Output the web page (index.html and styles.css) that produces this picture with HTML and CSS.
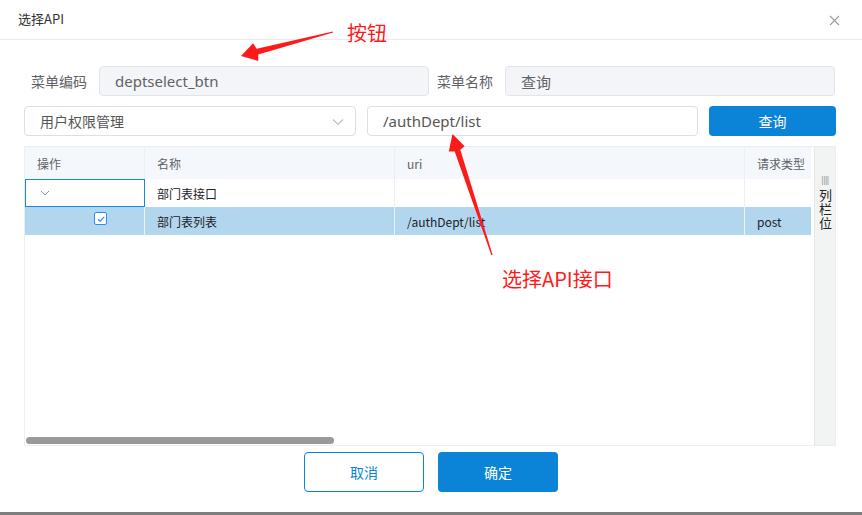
FILE: index.html
```html
<!DOCTYPE html>
<html lang="zh">
<head>
<meta charset="utf-8">
<title>选择API</title>
<link rel="stylesheet" href="styles.css">
</head>
<body>
<div class="dialog">
  <div class="dlg-head">
    <span class="dlg-title">选择API</span>
    <span class="dlg-close"><svg width="11" height="11" viewBox="0 0 11 11"><path d="M1 1L10 10M10 1L1 10" stroke="#9a9a9a" stroke-width="1.1" fill="none"/></svg></span>
  </div>
  <div class="dlg-body">
    <div class="form-row">
      <label class="lbl lbl-1">菜单编码</label>
      <div class="field disabled">deptselect_btn</div>
      <label class="lbl lbl-2">菜单名称</label>
      <div class="field disabled">查询</div>
    </div>
    <div class="search-row">
      <div class="field select">用户权限管理
        <svg class="chev" width="12" height="8" viewBox="0 0 12 8"><path d="M1 1.5L6 6.5L11 1.5" stroke="#b8bcc4" stroke-width="1.1" fill="none"/></svg>
      </div>
      <div class="field uri-input">/authDept/list</div>
      <button class="btn-primary search-btn">查询</button>
    </div>
    <div class="table-wrap">
      <div class="table-main">
        <div class="trow thead">
          <div class="cell c1">操作</div>
          <div class="cell c2">名称</div>
          <div class="cell c3">uri</div>
          <div class="cell c4">请求类型</div>
        </div>
        <div class="trow">
          <div class="cell c1 focused"><svg class="row-chev" width="10" height="6" viewBox="0 0 10 6"><path d="M1 1L5 5L9 1" stroke="#8f949c" stroke-width="1" fill="none"/></svg></div>
          <div class="cell c2 dark">部门表接口</div>
          <div class="cell c3"></div>
          <div class="cell c4"></div>
        </div>
        <div class="trow selected">
          <div class="cell c1 chk-cell"><span class="chk"><svg width="10" height="10" viewBox="0 0 10 10"><path d="M2 5.2L4.2 7.2L8.2 2.8" stroke="#2d8cf0" stroke-width="1.2" fill="none"/></svg></span></div>
          <div class="cell c2 dark">部门表列表</div>
          <div class="cell c3 dark">/authDept/list</div>
          <div class="cell c4 dark">post</div>
        </div>
        <div class="table-fill"></div>
        <div class="hscroll"><div class="hthumb"></div></div>
      </div>
      <div class="col-panel">
        <span class="grip">||||</span>
        <span class="col-text">列栏位</span>
      </div>
    </div>
    <div class="footer">
      <button class="btn-outline">取消</button>
      <button class="btn-primary ok-btn">确定</button>
    </div>
  </div>
  <div class="note note-1">按钮</div>
  <div class="note note-2">选择API接口</div>
  <svg class="arrows" width="862" height="515" viewBox="0 0 862 515">
    <polygon fill="#ff1a1a" points="333.1,32.6 258.3,54.6 258.2,61 241,56 253.1,43.3 256.7,48.8 332.9,31.4"/>
    <polygon fill="#ff1a1a" points="492.6,254.8 460.3,149.7 464.6,146.2 452.5,134 448.8,151.4 454.7,151.5 491.4,255.2"/>
  </svg>
</div>
<div class="backdrop-strip"></div>
</body>
</html>
```
FILE: styles.css
```css
* { box-sizing: border-box; }
html, body { margin: 0; padding: 0; }
body {
  width: 862px;
  height: 515px;
  overflow: hidden;
  background: #ffffff;
  font-family: "Noto Sans", "Noto Sans CJK SC", sans-serif;
  color: #606266;
}
.dialog {
  position: relative;
  height: 512px;
  background: #fff;
}
.dlg-head {
  height: 40px;
  border-bottom: 1px solid #e8eaec;
  display: flex;
  align-items: center;
  justify-content: space-between;
  padding: 0 22px 0 18px;
}
.dlg-title {
  font-size: 13px;
  color: #333;
  font-family: "Noto Sans CJK SC", sans-serif;
  margin-top: -2px;
}
.dlg-close { display: flex; margin-top: 1px; }
.dlg-body {
  padding: 26px 26px 0 24px;
}
.form-row {
  display: flex;
  align-items: center;
  height: 30px;
}
.lbl {
  font-family: "Noto Sans CJK SC", sans-serif;
  font-size: 14px;
  color: #606266;
  text-align: right;
  padding-right: 12px;
  flex: none;
}
.lbl-1 { width: 75px; }
.lbl-2 { width: 74px; margin-left: 2px; }
.field {
  height: 30px;
  border: 1px solid #dcdfe6;
  border-radius: 4px;
  display: flex;
  align-items: center;
  padding-left: 15px;
  font-size: 15px;
  color: #606266;
  font-family: "Noto Sans", "Noto Sans CJK SC", sans-serif;
}
.form-row .field { width: 330px; flex: none; }
.field.disabled { background: #f4f5f8; border-color: #e1e4ea; }
.search-row {
  display: flex;
  margin-top: 10px;
  height: 30px;
}
.select {
  width: 332px;
  font-size: 14px;
  font-family: "Noto Sans CJK SC", sans-serif;
  position: relative;
  color: #555;
}
.chev { position: absolute; right: 11px; top: 11px; }
.uri-input {
  width: 331px;
  margin-left: 11px;
  color: #555;
}
.btn-primary {
  background: #0b84d8;
  color: #fff;
  border: none;
  border-radius: 4px;
  font-family: "Noto Sans CJK SC", sans-serif;
  font-size: 14px;
  cursor: pointer;
}
.search-btn {
  width: 127px;
  margin-left: 11px;
  height: 30px;
}
.table-wrap {
  margin-top: 10px;
  height: 300px;
  border: 1px solid #ebeef5;
  display: flex;
}
.table-main {
  width: 786px;
  flex: none;
  display: flex;
  flex-direction: column;
}
.trow {
  display: flex;
  height: 28px;
}
.trow.thead {
  height: 32px;
  background: #f4f8fc;
}
.cell {
  font-family: "Noto Sans CJK SC", sans-serif;
  font-size: 12px;
  color: #666;
  display: flex;
  align-items: center;
  padding-left: 12px;
  border-right: 1px solid #ebeef5;
}
.cell.dark { color: #222; }
.c1 { width: 120px; }
.c2 { width: 250px; }
.c3 { width: 350px; }
.c4 { width: 66px; border-right: none; }
.thead .cell { color: #606266; }
.focused {
  border: 1px solid #1589e0;
  padding-left: 14px;
}
.trow.selected { background: #b3d6ef; }
.trow.selected .cell { border-right-color: #e8f1f8; }
.chk-cell { justify-content: flex-start; padding-left: 69px; }
.chk {
  width: 13px;
  height: 13px;
  border: 1px solid #2d8cf0;
  border-radius: 2px;
  background: #fff;
  display: flex;
  align-items: center;
  justify-content: center;
  margin-top: -5px;
}
.table-fill { flex: 1; }
.hscroll {
  height: 9px;
  padding: 1px 0 1px 1px;
}
.hthumb {
  width: 308px;
  height: 7px;
  background: #9a9a9a;
  border-radius: 4px;
}
.col-panel {
  margin-left: 3px;
  flex: 1;
  background: #f2f3f3;
  border-left: 1px solid #e6e8e8;
  display: flex;
  flex-direction: column;
  align-items: center;
  padding-top: 28px;
}
.grip {
  font-family: "Liberation Sans", sans-serif;
  font-size: 9px;
  color: #999;
  letter-spacing: -0.5px;
  line-height: 10px;
}
.col-text {
  writing-mode: vertical-rl;
  text-orientation: upright;
  font-family: "Noto Sans CJK SC", sans-serif;
  font-size: 13px;
  line-height: 14px;
  letter-spacing: 1px;
  color: #222;
  margin-top: 4px;
}
.footer {
  display: flex;
  justify-content: center;
  gap: 14px;
  margin-top: 6px;
  padding-left: 2px;
}
.btn-outline {
  width: 120px;
  height: 40px;
  border: 1px solid #0b84d8;
  background: #fff;
  color: #0b84d8;
  border-radius: 4px;
  font-family: "Noto Sans CJK SC", sans-serif;
  font-size: 14px;
}
.ok-btn { width: 120px; height: 40px; }
.note {
  position: absolute;
  font-family: "Noto Sans CJK SC", sans-serif;
  font-size: 20px;
  color: #ff1a1a;
  line-height: 24px;
}
.note-1 { left: 347px; top: 21px; }
.note-2 { left: 502px; top: 267px; }
.arrows { position: absolute; left: 0; top: 0; pointer-events: none; }
.backdrop-strip {
  height: 3px;
  background: #7e7e7e;
}
```
